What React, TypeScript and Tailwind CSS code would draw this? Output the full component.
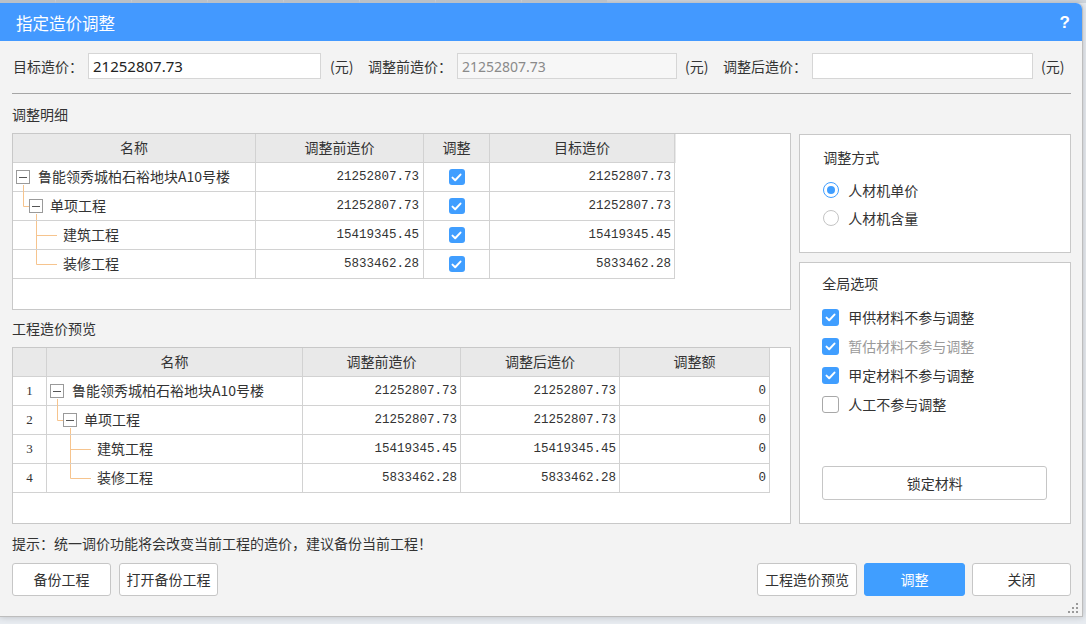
import React from "react";

const cjk = { fontFamily: "'Noto Sans CJK SC', 'Noto Sans', sans-serif" };
const mono = { fontFamily: "'Liberation Mono', 'DejaVu Sans Mono', monospace" };

const detailRows = [
  { name: "鲁能领秀城柏石裕地块A10号楼", before: "21252807.73", target: "21252807.73" },
  { name: "单项工程", before: "21252807.73", target: "21252807.73" },
  { name: "建筑工程", before: "15419345.45", target: "15419345.45" },
  { name: "装修工程", before: "5833462.28", target: "5833462.28" },
];

const previewRows = [
  { name: "鲁能领秀城柏石裕地块A10号楼", before: "21252807.73", after: "21252807.73" },
  { name: "单项工程", before: "21252807.73", after: "21252807.73" },
  { name: "建筑工程", before: "15419345.45", after: "15419345.45" },
  { name: "装修工程", before: "5833462.28", after: "5833462.28" },
];

const indent = [25, 37, 50, 50];

function Check({ className = "" }: { className?: string }) {
  return (
    <span className={`flex h-[16px] w-[16px] items-center justify-center rounded-[3px] bg-[#409eff] ${className}`}>
      <svg width="11" height="9" viewBox="0 0 11 9" fill="none">
        <path d="M1.5 4.6 L4.2 7.2 L9.5 1.6" stroke="white" strokeWidth="2" strokeLinecap="round" strokeLinejoin="round" />
      </svg>
    </span>
  );
}

function Minus() {
  return (
    <span className="flex h-[14px] w-[14px] items-center justify-center border border-[#9a9a9a] bg-white">
      <span className="h-[1px] w-[8px] bg-[#555]" />
    </span>
  );
}

// connector lines of the tree, drawn over the name column
function TreeLines() {
  return (
    <svg className="pointer-events-none absolute left-0 top-0 overflow-visible" width="60" height="29">
      <g stroke="#f6c48e" strokeWidth="1" fill="none">
        <path d="M10.5 22 V43.5 H16" />
        <path d="M23.5 51 V101.5 H44" />
        <path d="M23.5 72.5 H44" />
      </g>
    </svg>
  );
}

function Btn({ children, primary = false, w }: { children: React.ReactNode; primary?: boolean; w: string }) {
  return (
    <button
      className={`flex h-[33px] ${w} items-center justify-center rounded-[3px] border text-[14px] ${
        primary ? "border-[#409eff] bg-[#409eff] text-white" : "border-[#c6c6c6] bg-white text-[#333]"
      }`}
      style={cjk}
    >
      {children}
    </button>
  );
}

export default function App() {
  return (
    <div className="relative h-[624px] w-[1086px] overflow-hidden bg-[#e7ebf0]" style={cjk}>
      {/* app behind the dialog */}
      <div className="flex h-[3px] gap-[1px] bg-[#cfd5dc]">
        {[55, 75, 75, 75, 75, 75, 85, 85].map((w, i) => (
          <span key={i} className="h-[3px] bg-[#b9c0c8]" style={{ width: w }} />
        ))}
      </div>

      <div className="flex h-[614px] w-[1083px] flex-col rounded-tr-[6px] border-r border-b border-[#bdbdbd] bg-[#f3f3f3] shadow-[0_0_6px_rgba(0,0,0,0.2)]">
        {/* title bar */}
        <div className="flex h-[38px] shrink-0 items-center justify-between rounded-tr-[6px] bg-[#4399ff] pl-[16px] pr-[12px] pt-[2px]">
          <span className="text-[16.5px] text-white">指定造价调整</span>
          <span className="text-[17px] font-bold text-white" style={{ fontFamily: "'Liberation Sans', sans-serif" }}>
            ?
          </span>
        </div>

        <div className="flex flex-1 flex-col pl-[12px] pr-[11px] pt-[12px]">
          {/* target row */}
          <div className="flex h-[26px] items-center text-[14px] text-[#333]">
            <span className="w-[76px] pl-[1px]">目标造价：</span>
            <div
              className="flex h-[26px] w-[233px] items-center border border-[#d6d6d6] bg-white px-[4px] text-[15px] text-[#222]"
              style={{ fontFamily: "'Noto Sans', sans-serif" }}
            >
              21252807.73
            </div>
            <span className="ml-[9px] w-[29px]">(元)</span>
            <span className="ml-[9px] w-[89px]">调整前造价：</span>
            <div
              className="flex h-[26px] w-[220px] items-center border border-[#d6d6d6] bg-[#f7f7f7] px-[4px] text-[14px] text-[#8a8a8a]"
              style={{ fontFamily: "'Noto Sans', sans-serif" }}
            >
              21252807.73
            </div>
            <span className="ml-[8px] w-[29px]">(元)</span>
            <span className="ml-[9px] w-[89px]">调整后造价：</span>
            <div className="h-[26px] w-[221px] border border-[#d6d6d6] bg-white" />
            <span className="ml-[8px]">(元)</span>
          </div>

          <div className="mt-[14px] h-[1px] bg-[#a5a5a5]" />

          {/* main area */}
          <div className="flex">
            <div className="flex w-[780px] flex-col">
              <div className="flex h-[39px] items-center pt-[2px] text-[14px] text-[#333]">调整明细</div>
              <div className="h-[177px] border border-[#c8c8c8] bg-white">
                <div className="w-[663px]">
                  <div className="grid h-[29px] grid-cols-[243px_168px_66px_185px] bg-[#e9e9e9] text-[14px] text-[#333]">
                    {["名称", "调整前造价", "调整", "目标造价"].map((h) => (
                      <div key={h} className="flex items-center justify-center border-r border-b border-[#d2d2d2] pb-[1px]">
                        {h}
                      </div>
                    ))}
                  </div>
                  {detailRows.map((r, i) => (
                    <div key={i} className="grid h-[29px] grid-cols-[243px_168px_66px_185px] text-[#333]">
                      <div
                        className="relative flex items-center border-r border-b border-[#d2d2d2] pb-[2px] text-[14px]"
                        style={{ paddingLeft: indent[i] }}
                      >
                        {r.name}
                        {i === 0 && (
                          <>
                            <TreeLines />
                            <span className="absolute left-[3px] top-[7px]">
                              <Minus />
                            </span>
                          </>
                        )}
                        {i === 1 && (
                          <span className="absolute left-[16px] top-[7px]">
                            <Minus />
                          </span>
                        )}
                      </div>
                      <div className="flex items-center justify-end border-r border-b border-[#d2d2d2] pr-[4px] text-[12.5px]" style={mono}>
                        {r.before}
                      </div>
                      <div className="flex items-center justify-center border-r border-b border-[#d2d2d2]">
                        <Check />
                      </div>
                      <div className="flex items-center justify-end border-r border-b border-[#d2d2d2] pr-[3px] text-[12.5px]" style={mono}>
                        {r.target}
                      </div>
                    </div>
                  ))}
                </div>
              </div>

              <div className="flex h-[37px] items-center pb-[1px] text-[14px] text-[#333]">工程造价预览</div>
              <div className="h-[177px] border border-[#c8c8c8] bg-white">
                <div className="w-[757px]">
                  <div className="grid h-[29px] grid-cols-[34px_256px_158px_159px_150px] bg-[#e9e9e9] text-[14px] text-[#333]">
                    {["", "名称", "调整前造价", "调整后造价", "调整额"].map((h, i) => (
                      <div key={i} className="flex items-center justify-center border-r border-b border-[#d2d2d2] pb-[1px]">
                        {h}
                      </div>
                    ))}
                  </div>
                  {previewRows.map((r, i) => (
                    <div key={i} className="grid h-[29px] grid-cols-[34px_256px_158px_159px_150px] text-[#333]">
                      <div
                        className="flex items-center justify-center border-r border-b border-[#d2d2d2] text-[13px]"
                        style={{ fontFamily: "'Liberation Serif', serif" }}
                      >
                        {i + 1}
                      </div>
                      <div
                        className="relative flex items-center border-r border-b border-[#d2d2d2] pb-[2px] text-[14px]"
                        style={{ paddingLeft: indent[i] }}
                      >
                        {r.name}
                        {i === 0 && (
                          <>
                            <TreeLines />
                            <span className="absolute left-[3px] top-[7px]">
                              <Minus />
                            </span>
                          </>
                        )}
                        {i === 1 && (
                          <span className="absolute left-[16px] top-[7px]">
                            <Minus />
                          </span>
                        )}
                      </div>
                      <div className="flex items-center justify-end border-r border-b border-[#d2d2d2] pr-[3px] text-[12.5px]" style={mono}>
                        {r.before}
                      </div>
                      <div className="flex items-center justify-end border-r border-b border-[#d2d2d2] pr-[3px] text-[12.5px]" style={mono}>
                        {r.after}
                      </div>
                      <div className="flex items-center justify-end border-r border-b border-[#d2d2d2] pr-[3px] text-[12.5px]" style={mono}>
                        0
                      </div>
                    </div>
                  ))}
                </div>
              </div>
            </div>

            {/* right side */}
            <div className="ml-[8px] flex w-[272px] flex-col pt-[40px]">
              <div className="h-[119px] border border-[#c8c8c8] bg-white pl-[23px] pt-[12px] text-[14px] text-[#333]">
                <div className="h-[20px] leading-[20px]">调整方式</div>
                <div className="mt-[9px] flex h-[28px] items-center gap-[9px]">
                  <span className="flex h-[16px] w-[16px] items-center justify-center rounded-full border border-[#409eff] bg-white">
                    <span className="h-[8px] w-[8px] rounded-full bg-[#409eff]" />
                  </span>
                  人材机单价
                </div>
                <div className="flex h-[28px] items-center gap-[9px]">
                  <span className="h-[16px] w-[16px] rounded-full border border-[#c4c4c4] bg-white" />
                  人材机含量
                </div>
              </div>

              <div className="mt-[9px] h-[262px] border border-[#c8c8c8] bg-white pl-[22px] pt-[10px] text-[14px] text-[#333]">
                <div className="h-[20px] leading-[20px]">全局选项</div>
                <div className="mt-[10px] flex h-[29px] items-center gap-[9px]">
                  <Check className="h-[17px] w-[17px]" />
                  甲供材料不参与调整
                </div>
                <div className="flex h-[29px] items-center gap-[9px] text-[#9a9a9a]">
                  <Check className="h-[17px] w-[17px]" />
                  暂估材料不参与调整
                </div>
                <div className="flex h-[29px] items-center gap-[9px]">
                  <Check className="h-[17px] w-[17px]" />
                  甲定材料不参与调整
                </div>
                <div className="flex h-[29px] items-center gap-[9px]">
                  <span className="h-[17px] w-[17px] rounded-[3px] border border-[#a8a8a8] bg-white" />
                  人工不参与调整
                </div>
                <button className="mt-[47px] flex h-[34px] w-[225px] items-center justify-center rounded-[3px] border border-[#c6c6c6] bg-white text-[14px] text-[#333]">
                  锁定材料
                </button>
              </div>
            </div>
          </div>

          <div className="mt-[9px] h-[20px] text-[14px] leading-[20px] text-[#333]">
            提示：统一调价功能将会改变当前工程的造价，建议备份当前工程！
          </div>

          <div className="mt-[10px] flex items-center">
            <Btn w="w-[99px]">备份工程</Btn>
            <span className="ml-[8px]">
              <Btn w="w-[99px]">打开备份工程</Btn>
            </span>
            <div className="ml-auto flex gap-[7px]">
              <Btn w="w-[100px]">工程造价预览</Btn>
              <Btn primary w="w-[101px]">
                调整
              </Btn>
              <Btn w="w-[99px]">关闭</Btn>
            </div>
          </div>
        </div>

        {/* resize grip */}
        <div className="flex justify-end pr-[4px] pb-[3px]">
          <svg width="10" height="10" viewBox="0 0 10 10">
            <g fill="#9a9a9a">
              <rect x="8" y="0" width="2" height="2" />
              <rect x="4" y="4" width="2" height="2" />
              <rect x="8" y="4" width="2" height="2" />
              <rect x="0" y="8" width="2" height="2" />
              <rect x="4" y="8" width="2" height="2" />
              <rect x="8" y="8" width="2" height="2" />
            </g>
          </svg>
        </div>
      </div>
    </div>
  );
}
